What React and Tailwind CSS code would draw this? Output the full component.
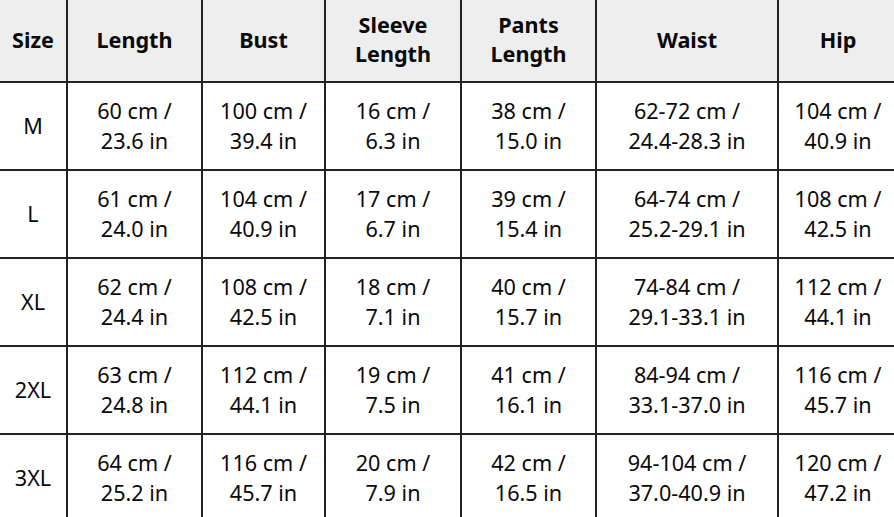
import React from 'react';

const headers = [
  ['Size'],
  ['Length'],
  ['Bust'],
  ['Sleeve', 'Length'],
  ['Pants', 'Length'],
  ['Waist'],
  ['Hip'],
];

const rows = [
  ['M', '60 cm / 23.6 in', '100 cm / 39.4 in', '16 cm / 6.3 in', '38 cm / 15.0 in', '62-72 cm / 24.4-28.3 in', '104 cm / 40.9 in'],
  ['L', '61 cm / 24.0 in', '104 cm / 40.9 in', '17 cm / 6.7 in', '39 cm / 15.4 in', '64-74 cm / 25.2-29.1 in', '108 cm / 42.5 in'],
  ['XL', '62 cm / 24.4 in', '108 cm / 42.5 in', '18 cm / 7.1 in', '40 cm / 15.7 in', '74-84 cm / 29.1-33.1 in', '112 cm / 44.1 in'],
  ['2XL', '63 cm / 24.8 in', '112 cm / 44.1 in', '19 cm / 7.5 in', '41 cm / 16.1 in', '84-94 cm / 33.1-37.0 in', '116 cm / 45.7 in'],
  ['3XL', '64 cm / 25.2 in', '116 cm / 45.7 in', '20 cm / 7.9 in', '42 cm / 16.5 in', '94-104 cm / 37.0-40.9 in', '120 cm / 47.2 in'],
];

const cols = 'grid grid-cols-[68px_135px_123px_136px_135px_182px_118px]';

function Cell({ children, last, head }) {
  return (
    <div
      className={
        'flex flex-col items-center justify-center text-center border-b-2 border-[#222] ' +
        (last ? '' : 'border-r-2 ') +
        (head ? 'h-[83px] pb-[3px] bg-[#eeeeee] font-bold leading-[29px]' : 'h-[88px] leading-[30px]')
      }
    >
      {children}
    </div>
  );
}

export default function App() {
  return (
    <div className="w-[894px] h-[517px] overflow-hidden bg-white text-[#0a0a0a] text-[21.6px] font-['Noto_Sans','Open_Sans',sans-serif]">
      <div className={cols}>
        {headers.map((h, i) => (
          <Cell key={i} head last={i === headers.length - 1}>
            {h.map((line) => (
              <span key={line}>{line}</span>
            ))}
          </Cell>
        ))}
        {rows.map((r) =>
          r.map((v, i) => {
            const parts = v.split(' / ');
            return (
              <Cell key={r[0] + i} last={i === r.length - 1}>
                {parts.length > 1 ? (
                  <>
                    <span>{parts[0]} /</span>
                    <span>{parts[1]}</span>
                  </>
                ) : (
                  <span>{v}</span>
                )}
              </Cell>
            );
          })
        )}
      </div>
    </div>
  );
}
